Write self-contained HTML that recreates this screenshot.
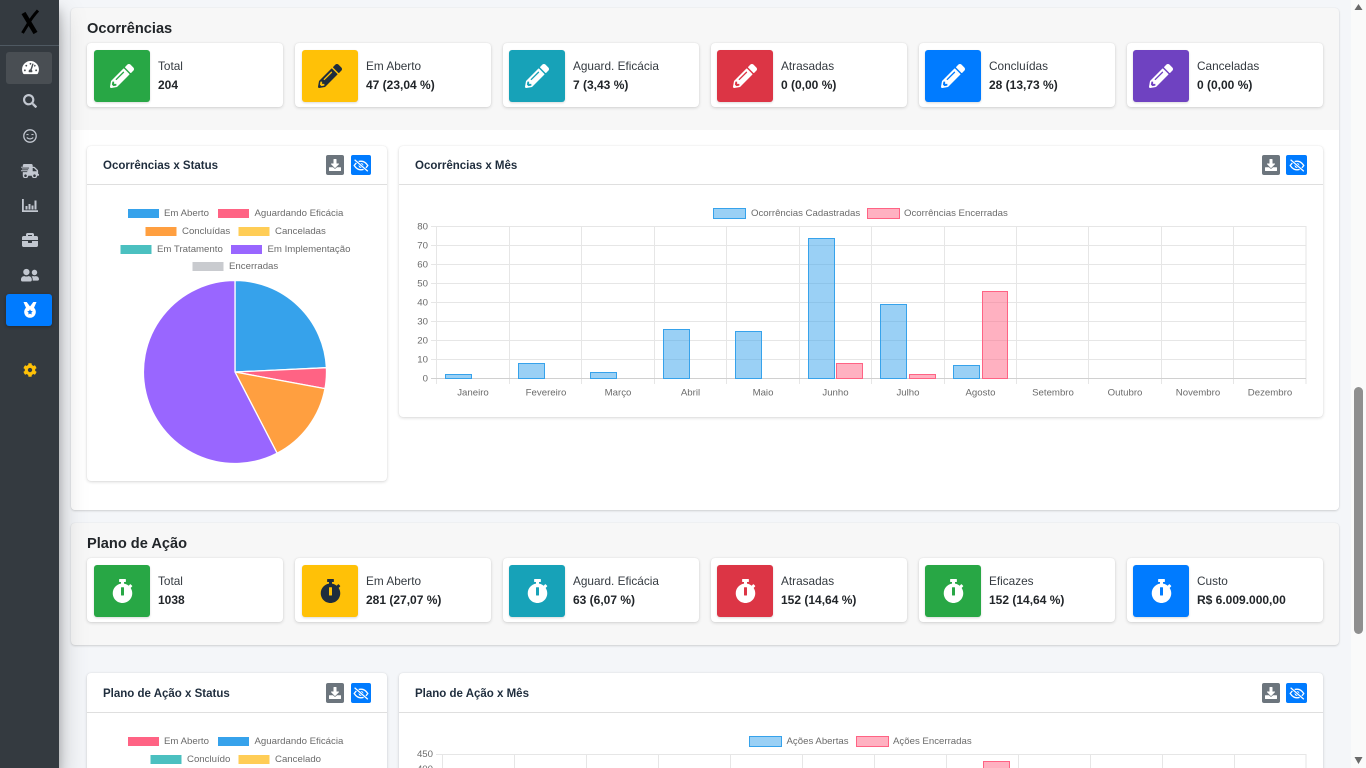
<!DOCTYPE html>
<html lang="pt-BR"><head><meta charset="utf-8"><title>Painel</title>
<style>
*{box-sizing:border-box}
html,body{margin:0;padding:0;width:1366px;height:768px;overflow:hidden;background:#f4f6f9;font-family:"Liberation Sans",sans-serif;color:#212529}
#root{position:relative;width:1366px;height:768px;overflow:hidden;background:#f4f6f9}
.abs,.side,.wrap,.box,.ic,.lb,.vl,.h,.card,.ct,.hr,.btn,.si{position:absolute}
.side{left:0;top:0;width:59px;height:768px;background:#343a40;box-shadow:0 14px 28px rgba(0,0,0,.25),0 10px 10px rgba(0,0,0,.22);z-index:5}
.si{display:block;color:#c2c7d0;fill:currentColor}
.wrap{background:#f7f7f7;border-radius:4px;box-shadow:0 0 1px rgba(0,0,0,.1),0 1px 2px rgba(0,0,0,.15)}
.box{top:43px;width:196px;height:64px;background:#fff;border-radius:4px;box-shadow:0 0 1px rgba(0,0,0,.1),0 1px 3px rgba(0,0,0,.15)}
.ic{left:7px;top:7px;width:56px;height:52px;border-radius:3px;display:flex;align-items:center;justify-content:center;color:#fff;box-shadow:0 1px 2px rgba(0,0,0,.15)}
.ic svg{fill:currentColor;display:block}
.lb{left:71px;top:15px;font-size:11.8px;line-height:16px;white-space:nowrap;color:#343a40}
.vl{left:71px;top:34px;font-size:12px;line-height:16px;font-weight:bold;white-space:nowrap;color:#212529}
.s .ic{left:6px}.s .lb,.s .vl{left:70px}
.h{font-size:14.6px;font-weight:bold;line-height:18px;color:#212529;white-space:nowrap}
.card{background:#fff;border-radius:4px;box-shadow:0 0 1px rgba(0,0,0,.1),0 1px 3px rgba(0,0,0,.15)}
.ct{left:16px;top:12px;font-size:11.5px;line-height:16px;font-weight:bold;color:#1f2d3d;white-space:nowrap}
.hr{left:0;right:0;top:38px;height:1px;background:#dfdfdf}
.btn{top:9px;height:20px;border-radius:2px;display:flex;align-items:center;justify-content:center;color:#fff}
.btn svg{display:block}
.low .hr{top:39px}.low .btn{top:10px}.low .ct{top:13px}
.g{background:#28a745}.y{background:#ffc107;color:#1f2d3d}.t{background:#17a2b8}.r{background:#dc3545}.b{background:#007bff}.p{background:#6f42c1}
svg text{font-family:"Liberation Sans",sans-serif;font-size:9.64px;fill:#6b6b6b}
</style></head>
<body>
<div id="root">
<svg width="0" height="0" style="position:absolute">
<symbol id="pen" viewBox="0 0 512 512"><path d="M497.9 142.1l-46.1 46.1c-4.7 4.7-12.3 4.7-17 0l-111-111c-4.7-4.7-4.7-12.3 0-17l46.1-46.1c18.7-18.7 49.1-18.7 67.9 0l60.1 60.1c18.8 18.7 18.8 49.1 0 67.9zM284.2 99.8L21.6 362.4.4 483.9c-2.9 16.4 11.4 30.6 27.8 27.8l121.5-21.3 262.6-262.6c4.7-4.7 4.7-12.3 0-17l-111-111c-4.8-4.7-12.4-4.7-17.1 0zM124.1 339.9c-5.5-5.5-5.5-14.3 0-19.8l154-154c5.5-5.5 14.3-5.5 19.8 0s5.5 14.3 0 19.8l-154 154c-5.5 5.5-14.3 5.5-19.8 0zM88 424h48v36.3l-64.5 11.3-31.1-31.1L51.7 376H88v48z"/></symbol>
<symbol id="sw" viewBox="0 0 448 512"><path d="M432 304c0 114.9-93.1 208-208 208S16 418.9 16 304c0-104 76.3-190.2 176-205.5V64h-28c-6.6 0-12-5.4-12-12V12c0-6.6 5.4-12 12-12h120c6.6 0 12 5.4 12 12v40c0 6.6-5.4 12-12 12h-28v34.5c37.5 5.8 71.7 21.6 99.7 44.6l27.5-27.5c4.7-4.7 12.3-4.7 17 0l28.3 28.3c4.7 4.7 4.7 12.3 0 17l-29.4 29.4-.6.6C419.7 223.3 432 262.2 432 304zm-176 36V188.5c0-6.6-5.4-12-12-12h-40c-6.6 0-12 5.4-12 12V340c0 6.6 5.4 12 12 12h40c6.6 0 12-5.4 12-12z"/></symbol>
<symbol id="dl" viewBox="0 0 512 512"><path fill="#fff" d="M216 0h80c13.3 0 24 10.7 24 24v168h87.7c17.8 0 26.7 21.5 14.1 34.1L269.7 378.3c-7.5 7.5-19.8 7.5-27.3 0L90.1 226.1c-12.6-12.6-3.7-34.1 14.1-34.1H192V24c0-13.3 10.7-24 24-24zm296 376v112c0 13.3-10.7 24-24 24H24c-13.3 0-24-10.7-24-24V376c0-13.3 10.7-24 24-24h146.7l49 49c20.1 20.1 52.5 20.1 72.6 0l49-49H488c13.3 0 24 10.7 24 24z"/></symbol>
<symbol id="eye" viewBox="0 0 20 16"><path d="M1.5 8C4 4.2 6.8 2.6 10 2.6S16 4.2 18.500 8C16 11.800 13.200 13.400 10 13.400S4 11.800 1.500 8z" fill="none" stroke="#fff" stroke-width="1.600"/><circle cx="10" cy="8" r="3" fill="#fff"/><path d="M2 .8L18.500 15.200" stroke="#007bff" stroke-width="3.400"/><path d="M2 .8L18.500 15.200" stroke="#fff" stroke-width="1.500"/></symbol>
</svg>

<div class="side">
<svg class="abs" style="left:18px;top:8px" width="24" height="28" viewBox="0 0 24 28"><path d="M5.500 5L17.500 25" stroke="#000" stroke-width="4.600" fill="none"/><path d="M20 2.500Q14 9 10 16L4.500 25" stroke="#000" stroke-width="3" fill="none"/></svg>
<div class="abs" style="left:0;top:45px;width:59px;height:1px;background:#4f5962"></div>
<div class="abs" style="left:6px;top:52px;width:46px;height:32px;background:#494e53;border-radius:3px"></div>
<svg class="si" style="left:22px;top:60px;color:#fff" width="17" height="15" viewBox="0 0 576 512"><path d="M288 32C128.940 32 0 160.940 0 320c0 52.800 14.250 102.260 39.060 144.800 5.610 9.620 16.300 15.200 27.440 15.200h443c11.140 0 21.830-5.580 27.440-15.200C561.750 422.260 576 372.800 576 320c0-159.060-128.940-288-288-288zm0 64c14.710 0 26.580 10.130 30.320 23.650-1.110 2.260-2.640 4.230-3.450 6.670l-9.220 27.670c-5.130 3.490-10.970 6.010-17.640 6.010-17.670 0-32-14.330-32-32S270.330 96 288 96zM96 384c-17.670 0-32-14.330-32-32s14.330-32 32-32 32 14.330 32 32-14.330 32-32 32zm48-160c-17.670 0-32-14.330-32-32s14.330-32 32-32 32 14.330 32 32-14.330 32-32 32zm246.770-72.410l-61.330 184C343.130 347.330 352 364.540 352 384c0 11.720-3.380 22.550-8.880 32H232.880c-5.500-9.450-8.880-20.280-8.880-32 0-33.940 26.500-61.430 59.900-63.590l61.340-184.010c4.170-12.560 17.730-19.450 30.360-15.170 12.570 4.190 19.350 17.770 15.170 30.360zm14.660 57.200l15.520-46.550c3.470-1.290 7.130-2.230 11.050-2.230 17.670 0 32 14.330 32 32s-14.330 32-32 32c-11.380-.01-20.890-6.280-26.570-15.220zM480 384c-17.670 0-32-14.330-32-32s14.330-32 32-32 32 14.330 32 32-14.330 32-32 32z"/></svg>
<svg class="si" style="left:23px;top:94px" width="14" height="14" viewBox="0 0 512 512"><path d="M505 442.700L405.300 343c-4.500-4.500-10.600-7-17-7H372c27.600-35.300 44-79.700 44-128C416 93.100 322.900 0 208 0S0 93.100 0 208s93.100 208 208 208c48.300 0 92.700-16.400 128-44v16.300c0 6.400 2.500 12.500 7 17l99.700 99.700c9.400 9.400 24.600 9.400 33.900 0l28.300-28.300c9.400-9.400 9.400-24.600.1-34zM208 336c-70.700 0-128-57.200-128-128 0-70.700 57.200-128 128-128 70.700 0 128 57.200 128 128 0 70.700-57.200 128-128 128z"/></svg>
<svg class="si" style="left:23px;top:129px" width="14" height="14" viewBox="0 0 14 14"><circle cx="7" cy="7" r="6.200" fill="none" stroke="#c2c7d0" stroke-width="1.300"/><path d="M3.500 6q1-1.300 2 0M8.500 6q1-1.300 2 0" fill="none" stroke="#c2c7d0" stroke-width="1"/><path d="M3.800 8.500q1.300 1.400 3.200 1.400t3.200-1.400" fill="none" stroke="#c2c7d0" stroke-width="1.100"/></svg>
<svg class="si" style="left:21px;top:164px" width="18" height="14.400" viewBox="0 0 640 512"><path d="M624 352h-16V243.900c0-12.700-5.100-24.900-14.100-33.900L494 110.100c-9-9-21.200-14.100-33.900-14.100H416V48c0-26.500-21.500-48-48-48H112C85.500 0 64 21.500 64 48v48H8c-4.400 0-8 3.600-8 8v16c0 4.400 3.600 8 8 8h272c4.400 0 8 3.600 8 8v16c0 4.400-3.600 8-8 8H40c-4.400 0-8 3.600-8 8v16c0 4.400 3.600 8 8 8h208c4.400 0 8 3.600 8 8v16c0 4.400-3.600 8-8 8H8c-4.400 0-8 3.600-8 8v16c0 4.400 3.600 8 8 8h208c4.400 0 8 3.600 8 8v16c0 4.400-3.600 8-8 8H64v128c0 53 43 96 96 96s96-43 96-96h128c0 53 43 96 96 96s96-43 96-96h48c8.800 0 16-7.200 16-16v-32c0-8.800-7.200-16-16-16zM160 464c-26.500 0-48-21.500-48-48s21.500-48 48-48 48 21.500 48 48-21.500 48-48 48zm320 0c-26.500 0-48-21.500-48-48s21.500-48 48-48 48 21.500 48 48-21.500 48-48 48zm80-208H416V144h44.100l99.900 99.900V256z"/></svg>
<svg class="si" style="left:22px;top:199px" width="16" height="13" viewBox="0 0 16 13"><path d="M0 0h1.800v11.200H16V13H0z"/><path d="M3.500 7h2v3.500h-2zM6.500 5h2v5.500h-2zM9.500 6.500h2v4h-2zM12.500 1.500h2v9h-2z"/></svg>
<svg class="si" style="left:22px;top:233px" width="16" height="14" viewBox="0 0 512 448"><path transform="translate(0 -32)" d="M320 336c0 8.840-7.160 16-16 16h-96c-8.840 0-16-7.160-16-16v-48H0v144c0 25.600 22.400 48 48 48h416c25.600 0 48-22.400 48-48V288H320v48zm144-208h-80V80c0-25.600-22.400-48-48-48H176c-25.600 0-48 22.400-48 48v48H48c-25.600 0-48 22.400-48 48v80h512v-80c0-25.600-22.400-48-48-48zm-144 0H192V96h128v32z"/></svg>
<svg class="si" style="left:21px;top:268px" width="18" height="14.400" viewBox="0 0 640 512"><path d="M192 256c61.900 0 112-50.100 112-112S253.900 32 192 32 80 82.100 80 144s50.100 112 112 112zm76.800 32h-8.300c-20.800 10-43.900 16-68.500 16s-47.600-6-68.500-16h-8.300C51.600 288 0 339.600 0 403.200V432c0 26.500 21.500 48 48 48h288c26.500 0 48-21.500 48-48v-28.800c0-63.600-51.600-115.200-115.200-115.200zM480 256c53 0 96-43 96-96s-43-96-96-96-96 43-96 96 43 96 96 96zm48 32h-3.800c-13.900 4.800-28.600 8-44.200 8s-30.300-3.200-44.200-8H432c-20.400 0-39.200 5.900-55.700 15.400 24.400 26.300 39.700 61.200 39.700 99.800v38.400c0 2.200-.5 4.300-.6 6.400H592c26.500 0 48-21.500 48-48 0-61.900-50.100-112-112-112z"/></svg>
<div class="abs" style="left:6px;top:294px;width:46px;height:32px;background:#007bff;border-radius:3px;box-shadow:0 1px 3px rgba(0,0,0,.3)"></div>
<svg class="si" style="left:23px;top:301px;color:#fff" width="14" height="18" viewBox="0 0 14 18"><path d="M.5 1h3.200L7 5.500 10.300 1h3.200L10.500 8h-7z" fill="#fff"/><circle cx="7" cy="11" r="5.800" fill="#fff"/><path d="M7 8.300l.85 1.700 1.900.3-1.350 1.300.3 1.900L7 12.600l-1.700.9.300-1.900-1.350-1.300 1.900-.3z" fill="#007bff"/></svg>
<svg class="si" style="left:23px;top:363px;color:#ffc107" width="14" height="14" viewBox="0 0 512 512"><path d="M487.400 315.700l-42.600-24.600c4.300-23.200 4.300-47 0-70.200l42.600-24.600c4.900-2.800 7.100-8.600 5.500-14-11.100-35.600-30-67.800-54.700-94.600-3.800-4.100-10-5.100-14.800-2.300L380.800 110c-17.900-15.400-38.500-27.300-60.800-35.100V25.800c0-5.600-3.900-10.500-9.400-11.700-36.700-8.200-74.300-7.800-109.200 0-5.500 1.200-9.400 6.100-9.400 11.700V75c-22.200 7.900-42.800 19.800-60.800 35.100L88.700 85.500c-4.900-2.800-11-1.900-14.800 2.300-24.700 26.700-43.600 58.900-54.700 94.600-1.700 5.400.6 11.200 5.500 14L67.300 221c-4.300 23.200-4.300 47 0 70.200l-42.600 24.600c-4.900 2.800-7.100 8.600-5.500 14 11.100 35.600 30 67.800 54.700 94.600 3.800 4.100 10 5.100 14.800 2.300l42.600-24.600c17.900 15.400 38.500 27.300 60.800 35.100v49.200c0 5.600 3.900 10.500 9.400 11.700 36.700 8.200 74.300 7.800 109.200 0 5.500-1.200 9.400-6.100 9.400-11.700v-49.200c22.200-7.900 42.800-19.800 60.800-35.100l42.600 24.600c4.900 2.800 11 1.900 14.800-2.300 24.700-26.700 43.600-58.900 54.700-94.600 1.500-5.500-.7-11.300-5.600-14.100zM256 336c-44.100 0-80-35.900-80-80s35.900-80 80-80 80 35.900 80 80-35.900 80-80 80z"/></svg>
</div>

<!-- Ocorrências wrapper -->
<div class="wrap" style="left:71px;top:8px;width:1268px;height:502px;overflow:hidden">
  <div class="abs" style="left:0;top:122px;width:1268px;height:380px;background:#fff"></div>
</div>
<div class="h" style="left:87px;top:20px">Ocorrências</div>

<div class="box" style="left:87px"><div class="ic g"><svg width="24" height="24"><use href="#pen"/></svg></div><div class="lb">Total</div><div class="vl">204</div></div>
<div class="box" style="left:295px"><div class="ic y"><svg width="24" height="24"><use href="#pen"/></svg></div><div class="lb">Em Aberto</div><div class="vl">47 (23,04 %)</div></div>
<div class="box s" style="left:503px"><div class="ic t"><svg width="24" height="24"><use href="#pen"/></svg></div><div class="lb">Aguard. Eficácia</div><div class="vl">7 (3,43 %)</div></div>
<div class="box s" style="left:711px"><div class="ic r"><svg width="24" height="24"><use href="#pen"/></svg></div><div class="lb">Atrasadas</div><div class="vl">0 (0,00 %)</div></div>
<div class="box s" style="left:919px"><div class="ic b"><svg width="24" height="24"><use href="#pen"/></svg></div><div class="lb">Concluídas</div><div class="vl">28 (13,73 %)</div></div>
<div class="box s" style="left:1127px"><div class="ic p"><svg width="24" height="24"><use href="#pen"/></svg></div><div class="lb">Canceladas</div><div class="vl">0 (0,00 %)</div></div>

<!-- Status card -->
<div class="card" style="left:87px;top:146px;width:300px;height:335px">
  <div class="ct">Ocorrências x Status</div><div class="hr"></div>
  <div class="btn" style="left:239px;width:18px;background:#6c757d"><svg width="12" height="12"><use href="#dl"/></svg></div>
  <div class="btn" style="left:264px;width:20px;background:#007bff"><svg width="16" height="13"><use href="#eye"/></svg></div>
</div>
<svg class="abs" style="left:87px;top:146px" width="300" height="335" viewBox="87 146 300 335">
  <rect x="128" y="209" width="31" height="9" fill="#36a2eb"/><text x="164" y="216">Em Aberto</text>
  <rect x="218" y="209" width="31" height="9" fill="#ff6384"/><text x="254.500" y="216">Aguardando Eficácia</text>
  <rect x="145.500" y="227" width="31" height="9" fill="#ff9f40"/><text x="182" y="234">Concluídas</text>
  <rect x="238.500" y="227" width="31" height="9" fill="#ffcd56"/><text x="275" y="234">Canceladas</text>
  <rect x="120.500" y="245" width="31" height="9" fill="#4bc0c0"/><text x="157" y="252">Em Tratamento</text>
  <rect x="231" y="245" width="31" height="9" fill="#9966ff"/><text x="267.500" y="252">Em Implementação</text>
  <rect x="192.500" y="262" width="31" height="9" fill="#c9cbcf"/><text x="229" y="269">Encerradas</text>
  <g stroke="#fff" stroke-width="1.300">
  <path d="M235 372V280.500A91.500 91.500 0 0 1 326.400 367.700Z" fill="#36a2eb"/>
  <path d="M235 372L326.400 367.700A91.500 91.500 0 0 1 324.970 388.670Z" fill="#ff6384"/>
  <path d="M235 372L324.970 388.670A91.500 91.500 0 0 1 277.100 453.200Z" fill="#ff9f40"/>
  <path d="M235 372L277.100 453.200A91.500 91.500 0 1 1 235 280.500Z" fill="#9966ff"/>
  </g>
</svg>

<!-- Mes card -->
<div class="card" style="left:399px;top:146px;width:924px;height:271px">
  <div class="ct">Ocorrências x Mês</div><div class="hr"></div>
  <div class="btn" style="left:863px;width:18px;background:#6c757d"><svg width="12" height="12"><use href="#dl"/></svg></div>
  <div class="btn" style="left:887px;width:21px;background:#007bff"><svg width="16" height="13"><use href="#eye"/></svg></div>
</div>
<svg class="abs" style="left:399px;top:146px" width="924" height="271" viewBox="399 146 924 271">
  <rect x="713.500" y="208.500" width="32" height="10" fill="rgba(54,162,235,.5)" stroke="#36a2eb"/><text x="751" y="216">Ocorrências Cadastradas</text>
  <rect x="867.500" y="208.500" width="32" height="10" fill="rgba(255,99,132,.5)" stroke="#ff6384"/><text x="904" y="216">Ocorrências Encerradas</text>
  <g stroke="#e6e6e6" stroke-width="1">
  <path d="M431 226.500H1306M431 245.500H1306M431 264.500H1306M431 283.500H1306M431 302.500H1306M431 321.500H1306M431 340.500H1306M431 359.500H1306"/>
  <path d="M436.500 226V384M509.500 226V384M581.500 226V384M654.500 226V384M726.500 226V384M799.500 226V384M871.500 226V384M944.500 226V384M1016.500 226V384M1088.500 226V384M1161.500 226V384M1233.500 226V384M1306 226V384"/>
  </g>
  <path d="M431 378.500H1306" stroke="#d0d0d0"/>
  <g fill="rgba(54,162,235,.5)" stroke="#36a2eb">
  <rect x="445.500" y="374.500" width="26" height="4"/><rect x="518.500" y="363.500" width="26" height="15"/><rect x="590.500" y="372.500" width="26" height="6"/><rect x="663.500" y="329.500" width="26" height="49"/><rect x="735.500" y="331.500" width="26" height="47"/><rect x="808.500" y="238.500" width="26" height="140"/><rect x="880.500" y="304.500" width="26" height="74"/><rect x="953.500" y="365.500" width="26" height="13"/>
  </g>
  <g fill="rgba(255,99,132,.5)" stroke="#ff6384">
  <rect x="836.500" y="363.500" width="26" height="15"/><rect x="909.500" y="374.500" width="26" height="4"/><rect x="982.500" y="291.500" width="25" height="87"/>
  </g>
  <g text-anchor="end">
  <text x="428" y="229.500">80</text><text x="428" y="248.500">70</text><text x="428" y="267.500">60</text><text x="428" y="286.500">50</text><text x="428" y="305.500">40</text><text x="428" y="324.500">30</text><text x="428" y="343.500">20</text><text x="428" y="362.500">10</text><text x="428" y="381.500">0</text>
  </g>
  <g text-anchor="middle">
  <text x="473" y="395.500">Janeiro</text><text x="546" y="395.500">Fevereiro</text><text x="618" y="395.500">Março</text><text x="690.500" y="395.500">Abril</text><text x="763" y="395.500">Maio</text><text x="835.500" y="395.500">Junho</text><text x="908" y="395.500">Julho</text><text x="980.500" y="395.500">Agosto</text><text x="1053" y="395.500">Setembro</text><text x="1125" y="395.500">Outubro</text><text x="1198" y="395.500">Novembro</text><text x="1270" y="395.500">Dezembro</text>
  </g>
</svg>

<!-- Plano de Ação -->
<div class="wrap" style="left:71px;top:523px;width:1268px;height:122px"></div>
<div class="h" style="left:87px;top:535px">Plano de Ação</div>
<div class="box" style="left:87px;top:558px"><div class="ic g"><svg width="21" height="24"><use href="#sw"/></svg></div><div class="lb">Total</div><div class="vl">1038</div></div>
<div class="box" style="left:295px;top:558px"><div class="ic y"><svg width="21" height="24"><use href="#sw"/></svg></div><div class="lb">Em Aberto</div><div class="vl">281 (27,07 %)</div></div>
<div class="box s" style="left:503px;top:558px"><div class="ic t"><svg width="21" height="24"><use href="#sw"/></svg></div><div class="lb">Aguard. Eficácia</div><div class="vl">63 (6,07 %)</div></div>
<div class="box s" style="left:711px;top:558px"><div class="ic r"><svg width="21" height="24"><use href="#sw"/></svg></div><div class="lb">Atrasadas</div><div class="vl">152 (14,64 %)</div></div>
<div class="box s" style="left:919px;top:558px"><div class="ic g"><svg width="21" height="24"><use href="#sw"/></svg></div><div class="lb">Eficazes</div><div class="vl">152 (14,64 %)</div></div>
<div class="box s" style="left:1127px;top:558px"><div class="ic b"><svg width="21" height="24"><use href="#sw"/></svg></div><div class="lb">Custo</div><div class="vl">R$ 6.009.000,00</div></div>

<!-- Bottom cards -->
<div class="card low" style="left:87px;top:673px;width:300px;height:120px">
  <div class="ct">Plano de Ação x Status</div><div class="hr"></div>
  <div class="btn" style="left:239px;width:18px;background:#6c757d"><svg width="12" height="12"><use href="#dl"/></svg></div>
  <div class="btn" style="left:264px;width:20px;background:#007bff"><svg width="16" height="13"><use href="#eye"/></svg></div>
</div>
<svg class="abs" style="left:87px;top:725px" width="300" height="43" viewBox="87 725 300 43">
  <rect x="128" y="737" width="31" height="9" fill="#ff6384"/><text x="164" y="744">Em Aberto</text>
  <rect x="218" y="737" width="31" height="9" fill="#36a2eb"/><text x="254.500" y="744">Aguardando Eficácia</text>
  <rect x="150.500" y="755" width="31" height="9" fill="#4bc0c0"/><text x="187" y="762">Concluído</text>
  <rect x="238.500" y="755" width="31" height="9" fill="#ffcd56"/><text x="275" y="762">Cancelado</text>
</svg>
<div class="card low" style="left:399px;top:673px;width:924px;height:120px">
  <div class="ct">Plano de Ação x Mês</div><div class="hr"></div>
  <div class="btn" style="left:863px;width:18px;background:#6c757d"><svg width="12" height="12"><use href="#dl"/></svg></div>
  <div class="btn" style="left:887px;width:21px;background:#007bff"><svg width="16" height="13"><use href="#eye"/></svg></div>
</div>
<svg class="abs" style="left:399px;top:725px" width="924" height="43" viewBox="399 725 924 43">
  <rect x="749.500" y="736.500" width="32" height="10" fill="rgba(54,162,235,.5)" stroke="#36a2eb"/><text x="786.500" y="744">Ações Abertas</text>
  <rect x="856.500" y="736.500" width="32" height="10" fill="rgba(255,99,132,.5)" stroke="#ff6384"/><text x="893" y="744">Ações Encerradas</text>
  <path d="M436 754.500H1306M442.500 754V768M514.500 754V768M586.500 754V768M658.500 754V768M730.500 754V768M802.500 754V768M874.500 754V768M946.500 754V768M1018.500 754V768M1090.500 754V768M1162.500 754V768M1234.500 754V768M1306 754V768" stroke="#e6e6e6"/>
  <rect x="983.500" y="761.500" width="26" height="10" fill="rgba(255,99,132,.5)" stroke="#ff6384"/>
  <text x="433" y="757" text-anchor="end">450</text><text x="433" y="772" text-anchor="end">400</text>
</svg>

<!-- Scrollbar -->
<div class="abs" style="left:1351px;top:0;width:15px;height:768px;background:#fafafa;z-index:6"></div>
<div class="abs" style="left:1354px;top:387px;width:9px;height:247px;background:#8f8f8f;border-radius:5px;z-index:7"></div>
<svg class="abs" style="left:1354px;top:3px;z-index:7" width="9" height="9"><path d="M.5 7L4.500 1 8.500 7z" fill="#6a6a6a"/></svg>
<svg class="abs" style="left:1354px;top:756px;z-index:7" width="9" height="9"><path d="M.5 1L4.500 8 8.500 1z" fill="#6a6a6a"/></svg>
</div>
</body></html>
